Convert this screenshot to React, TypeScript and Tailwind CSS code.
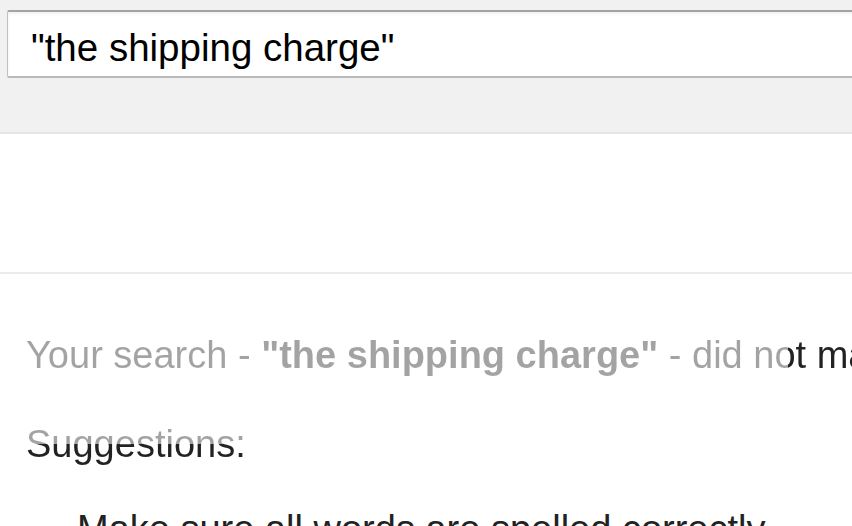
import React from 'react';

export default function App() {
  return (
    <div className="w-[852px] h-[526px] overflow-hidden bg-white font-['Liberation_Sans',Arial,sans-serif]">
      {/* search header */}
      <div className="h-[134px] bg-[#f1f1f1] border-b-2 border-[#e5e5e5] pt-[10px] pl-[7px]">
        <div className="w-[900px] h-[68px] bg-white border border-[#c0c0c0] border-t-2 border-t-[#a3a3a3] border-b-2 border-b-[#b9b9b9] rounded-[2px] shadow-[inset_0_2px_3px_rgba(0,0,0,0.06)] pl-[23px] pt-[15px]">
          <div className="text-[38.5px] leading-[42px] text-black whitespace-nowrap">"the shipping charge"</div>
        </div>
      </div>

      {/* empty tabs row */}
      <div className="h-[140px] border-b-2 border-[#ebebeb]" />

      {/* no results */}
      <div className="pl-[26px] pt-[60px] text-[38px] leading-[43px] whitespace-nowrap">
        <p className="bg-[linear-gradient(to_right,#a3a3a3_762px,#222_762px)] bg-clip-text text-transparent">
          Your search - <b>"the shipping charge"</b> - did not match any documents.
        </p>
        <p className="mt-[46px] w-max bg-[linear-gradient(to_bottom,#a3a3a3_21px,#222_21px)] bg-clip-text text-transparent">
          Suggestions:
        </p>
        <ul className="mt-[42px] text-[#222]">
          <li className="flex items-center">
            <span className="ml-[19px] mr-[26px] w-[6px] h-[6px] rounded-full bg-[#222]" />
            Make sure all words are spelled correctly.
          </li>
        </ul>
      </div>
    </div>
  );
}
